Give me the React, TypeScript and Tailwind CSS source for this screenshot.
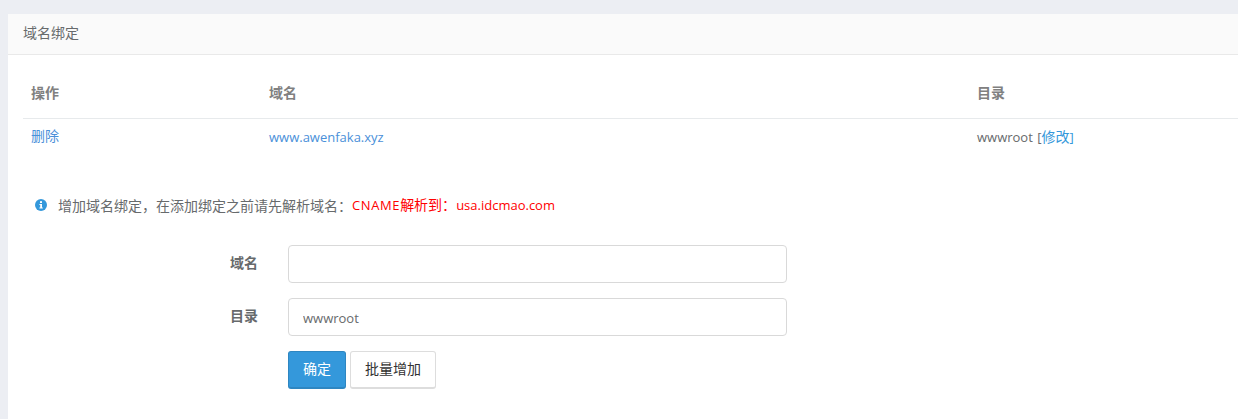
const fontStack = { fontFamily: '"Open Sans", "Noto Sans CJK SC", sans-serif' };

export default function App() {
  return (
    <div className="h-[419px] w-[1238px] overflow-hidden bg-[#eceef3] pt-[14px] pl-2 text-[13px] text-[#676a6c]" style={fontStack}>
      <div className="w-[1240px] h-[405px] rounded-t-[3px] bg-white">
        <div className="h-[41px] border-b border-[#e9e9e9] bg-[#fafafa] pl-[15px] pt-[9px] text-[14px] leading-[19px]">域名绑定</div>

        <div className="pl-[15px] pt-[15px]">
          <div className="flex h-[49px] items-center border-b border-[#e7eaec] pb-1 text-[14px] font-bold text-[#808080]">
            <div className="w-[238px] pl-2">操作</div>
            <div className="w-[708px] pl-2">域名</div>
            <div className="pl-2">目录</div>
          </div>
          <div className="flex h-[37px] items-center">
            <div className="w-[238px] pb-1 pl-2 text-[14px] text-[#4a90d9]">删除</div>
            <div className="w-[708px] pl-2 text-[#4a90d9]">www.awenfaka.xyz</div>
            <div className="pb-[2px] pl-2">
              wwwroot <span className="ml-px">[</span><span className="text-[14px] text-[#3498db]">修改</span><span className="text-[#3498db]">]</span>
            </div>
          </div>
        </div>

        <div className="flex items-center pl-[27px] pt-[39px] leading-[19px]">
          <svg viewBox="0 0 12 12" className="h-3 w-3">
            <circle cx="6" cy="6" r="6" fill="#3498db" />
            <rect x="5" y="2.2" width="2" height="1.8" fill="#fff" />
            <path d="M4.4 5h2.6v3.6h.8v1H4.4v-1h.8V6h-.8z" fill="#fff" />
          </svg>
          <span className="ml-[11px] text-[14px]">增加域名绑定，在添加绑定之前请先解析域名：</span>
          <span className="text-[#ff0000]">
            <span className="tracking-[0.6px]">CNAME</span><span className="text-[14px]">解析到：</span>usa.idcmao.com
          </span>
        </div>

        <div className="mt-[30px] flex flex-col gap-[15px]">
          <div className="flex items-center">
            <label className="w-[250px] pb-[3px] text-right text-[14px] font-bold">域名</label>
            <input className="ml-[30px] h-[38px] w-[499px] rounded border border-[#d9d9d9] bg-white px-[14px] outline-none" />
          </div>
          <div className="flex items-center">
            <label className="w-[250px] pb-[3px] text-right text-[14px] font-bold">目录</label>
            <input defaultValue="wwwroot" className="ml-[30px] h-[38px] w-[499px] rounded border border-[#d9d9d9] bg-white px-[14px] pt-[2px] text-[#676a6c] outline-none" />
          </div>
        </div>

        <div className="mt-[15px] flex gap-1 pl-[280px] text-[14px]">
          <button className="h-[38px] w-[58px] rounded-[3px] border border-[#2e86c1] border-b-2 bg-[#3498db] pb-[2px] text-white">确定</button>
          <button className="h-[38px] w-[86px] rounded-[3px] border border-[#dddddd] border-b-2 bg-white pb-[2px] text-[#333333]">批量增加</button>
        </div>
      </div>
    </div>
  );
}
